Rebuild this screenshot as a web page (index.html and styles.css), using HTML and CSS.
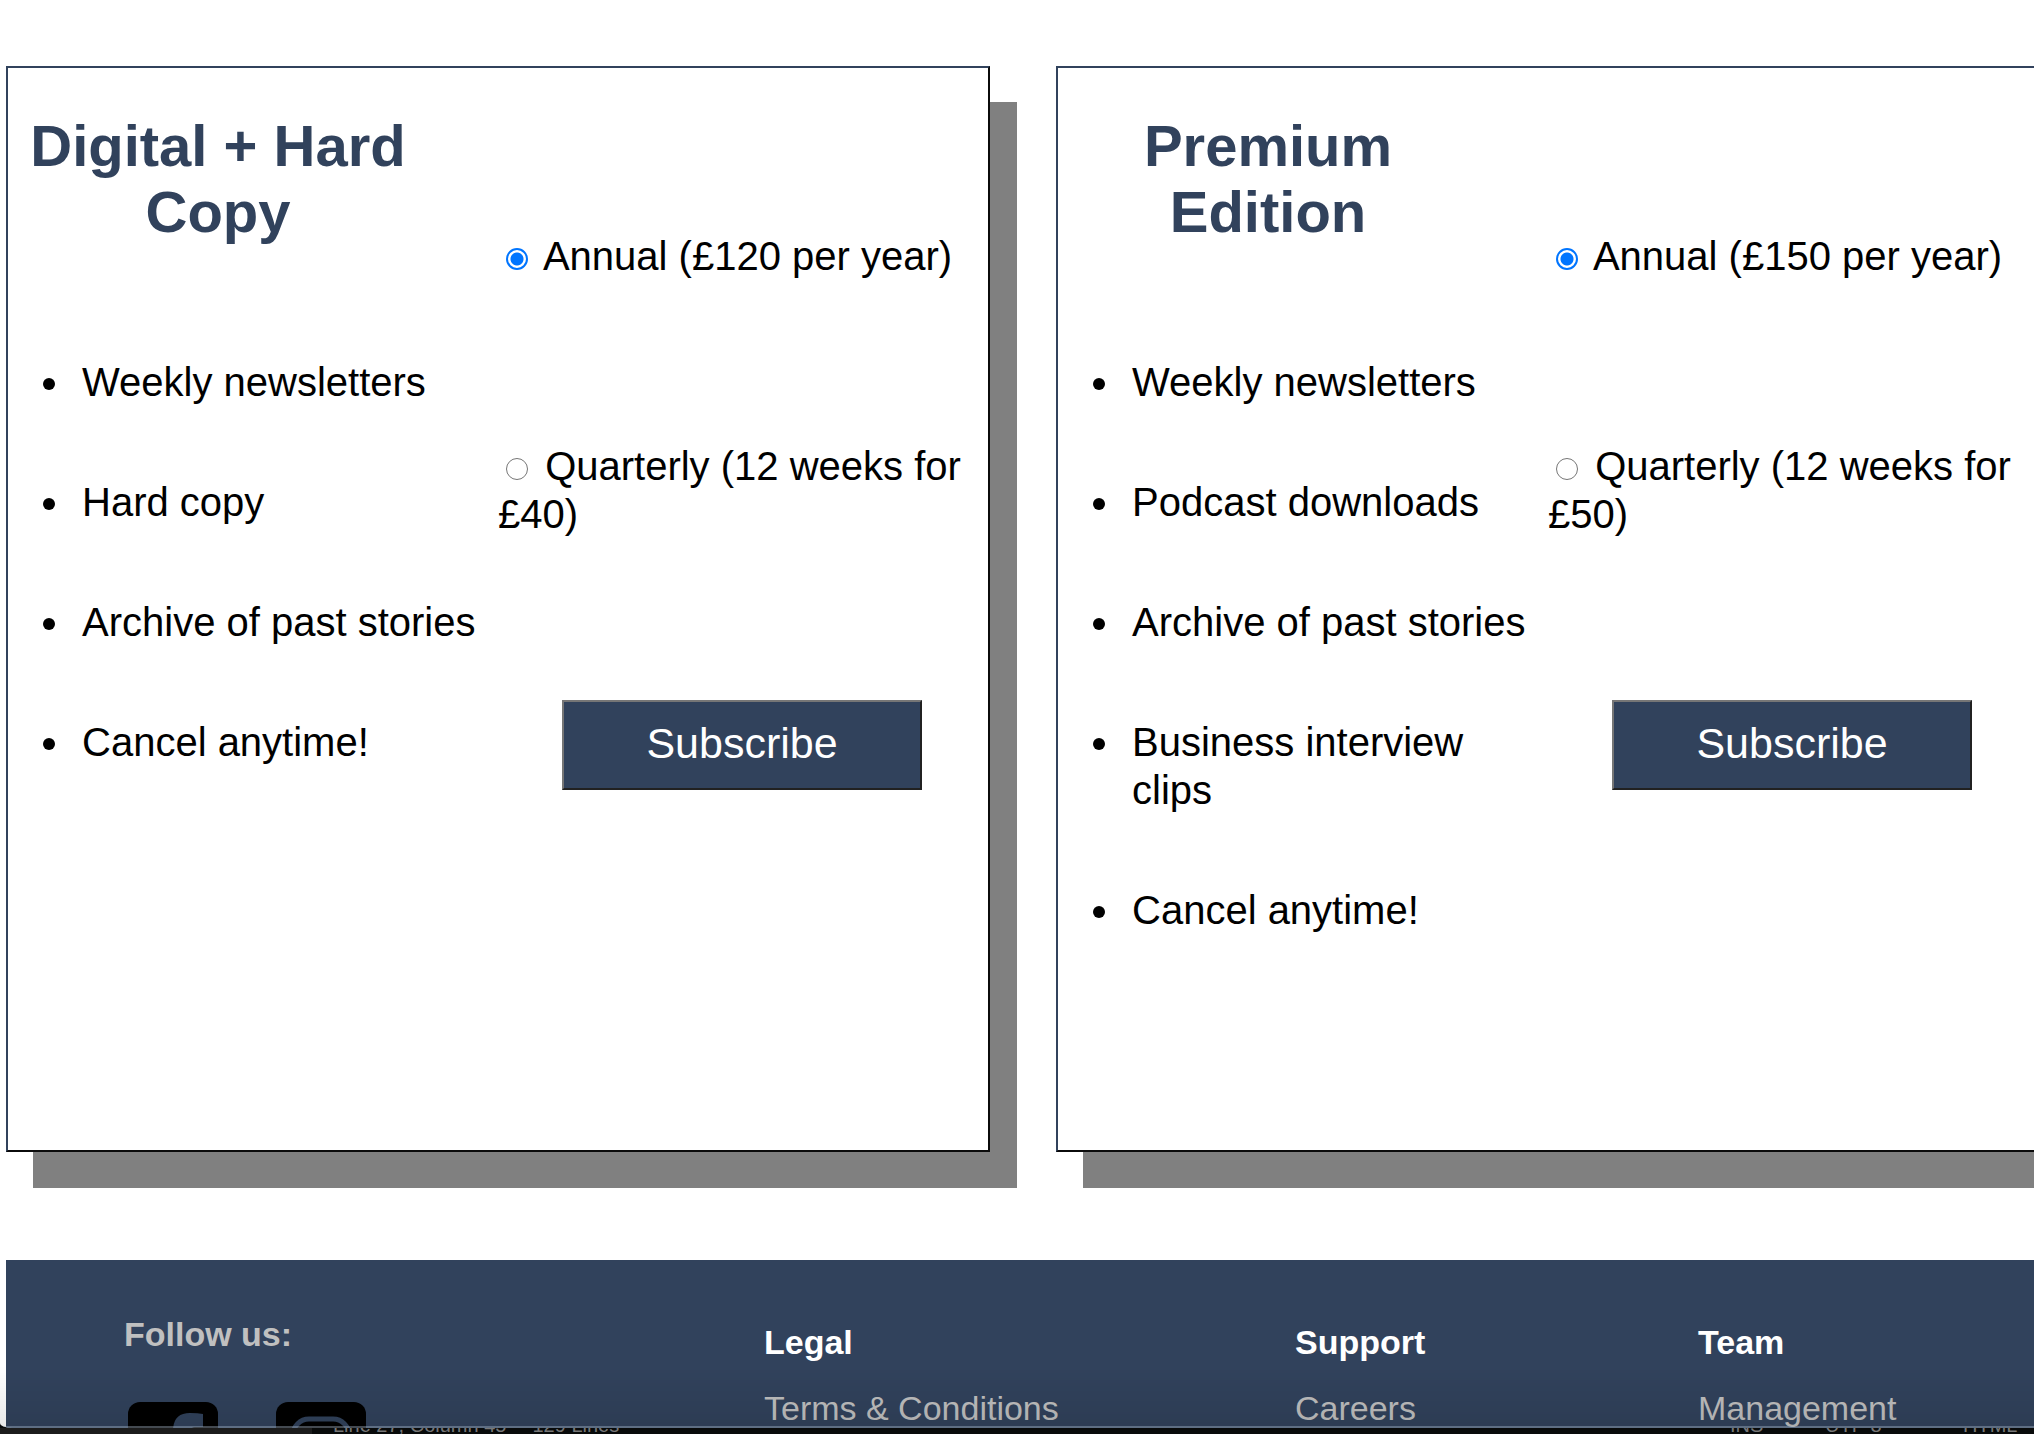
FILE: index.html
```html
<!DOCTYPE html>
<html lang="en">
<head>
<meta charset="utf-8">
<title>Subscriptions</title>
<link rel="stylesheet" href="styles.css">
</head>
<body>
<div class="viewport">
<main class="plans">
  <form class="plan">
    <section>
      <h2 class="plan-title">Digital + Hard Copy</h2>
      <ul class="features">
        <li>Weekly newsletters</li>
        <li>Hard copy</li>
        <li>Archive of past stories</li>
        <li>Cancel anytime!</li>
      </ul>
    </section>
    <section class="options">
      <div><input class="radio" type="radio" name="term" id="copy-year" checked> <label for="copy-year">Annual (£120 per year)</label></div>
      <div><input class="radio" type="radio" name="term" id="copy-quarter"> <label for="copy-quarter">Quarterly (12 weeks for £40)</label></div>
      <button class="subscribe" type="button">Subscribe</button>
    </section>
  </form>
  <form class="plan">
    <section>
      <h2 class="plan-title">Premium Edition</h2>
      <ul class="features">
        <li>Weekly newsletters</li>
        <li>Podcast downloads</li>
        <li>Archive of past stories</li>
        <li>Business interview clips</li>
        <li>Cancel anytime!</li>
      </ul>
    </section>
    <section class="options">
      <div><input class="radio" type="radio" name="term" id="premium-year" checked> <label for="premium-year">Annual (£150 per year)</label></div>
      <div><input class="radio" type="radio" name="term" id="premium-quarter"> <label for="premium-quarter">Quarterly (12 weeks for £50)</label></div>
      <button class="subscribe" type="button">Subscribe</button>
    </section>
  </form>
</main>
<footer class="footer">
  <section class="social">
    <h3 class="follow">Follow us:</h3>
    <div class="social-links">
      <a href="#" aria-label="Facebook"><svg class="icon" viewBox="0 0 90 90"><rect width="90" height="90" rx="12"/><path class="cut" d="M75 12v13h-8q-5 0-7 8v7h15l-2 15H60v35H45V55H35V40h10V27Q46 11 62 11q8 0 13 1z"/></svg></a>
      <a href="#" aria-label="Instagram"><svg class="icon" viewBox="0 0 90 90"><rect width="90" height="90" rx="12"/><rect class="line" x="17" y="17" width="56" height="56" rx="16"/><circle class="line" cx="45" cy="45" r="13"/></svg></a>
    </div>
  </section>
  <section class="links"><h3>Legal</h3><a href="#">Terms &amp; Conditions</a></section>
  <section class="links"><h3>Support</h3><a href="#">Careers</a></section>
  <section class="links"><h3>Team</h3><a href="#">Management</a></section>
</footer>
</div>
<div class="statusbar">
  <div class="side"></div>
  <span>Line 27, Column 45</span><span>129 Lines</span>
  <div class="modes"><span>INS</span><span>UTF-8</span><span>HTML</span></div>
</div>
</body>
</html>
```
FILE: styles.css
```css
* { box-sizing: border-box; }
html { background: #080a0a; }
body {
  margin: 0;
  height: 100vh;
  display: flex;
  flex-direction: column;
  overflow: hidden;
  font: 40px/48px "Liberation Sans", Arial, sans-serif;
  color: #000;
  background: #080a0a;
}
h2, h3, ul { margin: 0; padding: 0; }
.viewport {
  flex: 1;
  min-height: 0;
  position: relative;
  overflow: hidden;
  padding: 66px 0 0 6px;
  background: #fff;
  border-radius: 0 0 0 12px / 0 0 0 5px;
}
/* window edge: soft shade ending in a light hairline */
.viewport::after {
  content: "";
  position: absolute;
  inset: auto 0 0 0;
  height: 60px;
  border-bottom: 2px solid rgba(150, 165, 180, .45);
  background: linear-gradient(rgba(0, 0, 0, 0), rgba(0, 0, 0, .09));
  pointer-events: none;
}
.plans {
  display: grid;
  grid-template-columns: repeat(2, minmax(0, 1fr));
  gap: 66px;
  margin-right: -6px;
}
.plan {
  display: grid;
  grid-template-columns: repeat(2, minmax(0, 1fr));
  border: 2px solid;
  border-color: #31425c #0b0b0b #0b0b0b #31425c;
  background: #fff;
  box-shadow: 27px 36px 0 #808080;
}
.plan-title {
  padding: 45px 70px 113px 0;
  font-size: 58px;
  line-height: 66px;
  text-align: center;
  color: #31425c;
}
.features { padding: 0 0 144px 66px; }
.features li { margin-bottom: 72px; padding-left: 8px; }
.options {
  display: flex;
  flex-direction: column;
  align-items: flex-start;
  gap: 162px;
  padding-top: 164px;
}
.radio {
  appearance: none;
  width: 22px;
  height: 22px;
  margin: 0 6px 0 8px;
  border: 1px solid #767676;
  border-radius: 50%;
  background: #fff;
}
.radio:checked {
  border: 2px solid #0075ff;
  background: radial-gradient(circle, #0075ff 6px, #fff 7px);
}
.subscribe {
  align-self: center;
  width: 360px;
  height: 90px;
  margin-right: 2px;
  padding: 0 0 4px;
  border: 2px solid;
  border-color: #767676 #212121 #212121 #767676;
  background: #31425c;
  color: #fff;
  font: 43px/48px "Liberation Sans", Arial, sans-serif;
}
.footer {
  display: grid;
  grid-template-columns: 640fr 531fr 403fr 336fr;
  margin-top: 108px;
  padding: 50px 0 60px 118px;
  background: #31425c;
  color: #bfbfbf;
  font-size: 34px;
}
.footer h3 { font-size: 34px; }
.follow { color: #c0c0c0; }
.social-links { display: flex; gap: 58px; padding: 44px 0 0 4px; }
.icon { display: block; width: 90px; height: 90px; }
.cut { fill: #31425c; }
.line { fill: none; stroke: #31425c; stroke-width: 5; }
.links { padding-top: 8px; }
.links h3 { margin-bottom: 18px; color: #fff; }
.links a { display: block; color: #bfbfbf; text-decoration: none; }
.statusbar {
  display: flex;
  align-items: flex-end;
  height: 6px;
  overflow: hidden;
  font-size: 20px;
  line-height: 18px;
  color: #777;
}
.side { width: 312px; height: 6px; margin-right: 21px; background: #1c1c1c; }
.statusbar span { margin-right: 26px; }
.modes {
  display: grid;
  grid-template-columns: 95px 138px 71px;
  margin-left: auto;
}
.modes span { margin: 0; }
```
